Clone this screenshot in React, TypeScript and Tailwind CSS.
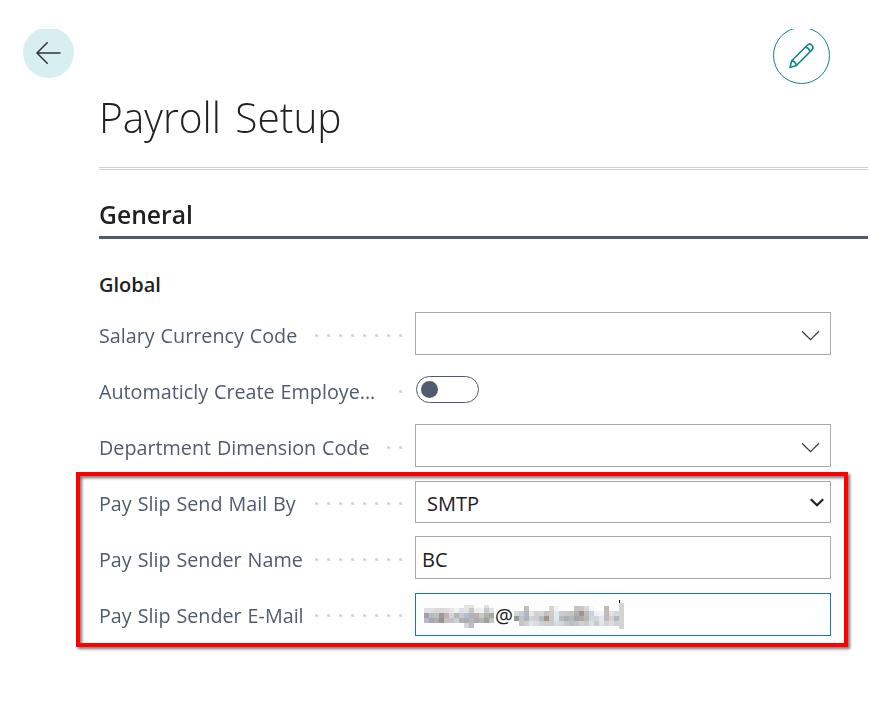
import React from "react";

type Strip = { y: number; h: number; cells: string };

// Each row lists one hex colour per 5px block; "-" leaves the block empty.
const localPart: Strip[] = [
  { y: 11, h: 3, cells: "- - - - - - - - e4e4e4 e4e4e4 - - e0e0e0 -" },
  { y: 14, h: 5, cells: "e2e2e6 e2e0e4 dedada dadade e0dcdc e6e6e6 f2f2f2 e0e0e8 e2e2e2 c8c8cc ececec f0f0f0 c8c8cc e0e0e0" },
  { y: 19, h: 5, cells: "a0a0b0 b8bcb8 c0c0c0 a09898 c4b4b0 d8d4d4 b4b8bc c8c8d0 b8bcd0 b4b0b8 b8b0b0 c8c8bc b0b4b0 a0a8a0" },
  { y: 24, h: 5, cells: "b8b8d0 a4a8b4 b4acb4 949494 c8c0b8 c4c4c8 c8d0d8 b0b0b0 acacb4 b8b4b8 acacb8 b4b4b4 9ca098 c0c4c0" },
  { y: 29, h: 5, cells: "- - - - - - - - dcd4d4 b8bcc8 - - - -" },
];

const domainPart: Strip[] = [
  { y: 12, h: 5, cells: "- - bcc0c0 - - - - dcd0cc ecf4fc - - - c4c4c4 d0c8c4 d8d8dc f0f8ff - - c0b8bc - -" },
  { y: 17, h: 5, cells: "d8d8d8 c8ccd0 b0b8bc e8e8e8 d8d0cc d0d8dc c0c0c8 d8c8c0 e0e8f0 c8ccd0 c8c8cc c0c4c4 b0b0b0 a09490 c0bcb8 c8d4e0 f0f0f0 f4f4f4 c0b8c0 e0e0e0 d4d8dc" },
  { y: 22, h: 5, cells: "9a9690 b8c4d0 a8b4bc d0d4d8 c8d0dc b4b8c0 a09488 d0c8c0 d8e8f4 b8b8c0 a8b0b0 b0b8b8 a4a4a4 aca8a4 b8b8b4 d0d8dc c8d8e4 e0e8f0 c0b8c0 d8d0c8 a8b8c4" },
  { y: 27, h: 5, cells: "- c4c4c8 d0d0d0 e0e4e8 dcdcdc ccd0d4 d0ccc8 c8ccd0 d8dce0 d4d4d4 c4c8c8 bcc0c0 c4c4c4 d0d0d0 c8ccc8 d8e0e4 c8ccd0 e4e4e4 d4d4d8 dcdcdc d0d0d4" },
];

function Mosaic({ strips, cols }: { strips: Strip[]; cols: number }) {
  return (
    <svg width={cols * 5} height="41" className="shrink-0" shapeRendering="crispEdges" aria-hidden="true">
      {strips.map((s) =>
        s.cells.split(" ").map((c, i) =>
          c === "-" ? null : <rect key={`${s.y}-${i}`} x={i * 5} y={s.y} width="5" height={s.h} fill={`#${c}`} />
        )
      )}
    </svg>
  );
}

function Row({ label, dots, children }: { label: string; dots: number; children: React.ReactNode }) {
  return (
    <div className="flex h-14 items-start">
      <div className="flex w-[316px] shrink-0 items-start pr-[13px]">
        <div className="mt-[10px] w-0 flex-1">
          <span className="inline-block origin-left scale-x-[.987] whitespace-nowrap text-[20px] leading-7 text-[#505c6d] [word-spacing:.8px]">
            {label}
          </span>
        </div>
        <div className="mt-[22px] flex gap-[9px]">
          {Array.from({ length: dots }, (_, i) => (
            <i key={i} className="size-[3px] rounded-full bg-[#cfd2d8]" />
          ))}
        </div>
      </div>
      {children}
    </div>
  );
}

const field = "flex w-[416px] border";
const value = "inline-block text-[20px] leading-7";

function Lookup() {
  return (
    <div className={`${field} h-[43px] items-center justify-end border-[#a9a9a9] pr-[10px]`}>
      <svg width="19" height="11" viewBox="0 0 19 11" fill="none" stroke="#404040" strokeWidth="1.3" className="mt-[3px]">
        <path d="M1 1.2 9.5 9.6 18 1.2" />
      </svg>
    </div>
  );
}

export default function App() {
  return (
    <div className="relative h-[704px] w-[870px] overflow-hidden bg-white pt-[29px] font-['Open_Sans','Noto_Sans',sans-serif] text-[#212121]">
      <header className="flex h-[55px] items-start justify-between overflow-hidden pl-[23px] pr-10">
        <button className="-mt-[2px] size-[51px] rounded-full bg-[#d8eff1]">
          <svg width="51" height="51" viewBox="0 0 51 51" fill="none" stroke="#333" strokeWidth="1.5">
            <path d="M37.500 26H14M24.700 15.300 14 26l10.700 10.700" />
          </svg>
        </button>
        <button className="-mt-[2px] size-[57px] shrink-0 rounded-full border border-[#118489]">
          <svg width="55" height="55" viewBox="1 1 55 55" fill="none" stroke="#118489" strokeWidth="1.6" strokeLinejoin="round">
            <path d="M17 40.400 18.700 33.800 34.300 18.300a3.250 3.250 0 0 1 4.600 4.600L23.400 38.500Z" />
            <path d="M18.900 33.900q3.700.7 4.400 4.400M32.500 20.100q3.500 1 4.600 4.500" />
          </svg>
        </button>
      </header>
      <main className="pl-[99px]">
        <div className="mr-[2px]">
          <h1 className="mt-px h-16 origin-left scale-x-[.945] whitespace-nowrap text-[43px] font-light leading-[64px] [word-spacing:4px]">
            Payroll Setup
          </h1>
          <div className="mt-[18px] border-t-[3px] border-double border-[#cfcfd6]" />
          <div className="mt-[26px] border-b-[3px] border-[#505c6d] pb-1">
            <h2 className="h-9 origin-left scale-x-[.95] text-[26px] font-semibold leading-9">General</h2>
          </div>
        </div>
        <h3 className="mb-[13px] mt-8 h-7 text-[20px] font-semibold leading-7">Global</h3>

        <Row label="Salary Currency Code" dots={8}>
          <Lookup />
        </Row>
        <Row label="Automaticly Create Employe..." dots={1}>
          <div className="ml-px mt-2 flex h-[27px] w-[63px] items-center rounded-full border border-[#505c6d] pl-1">
            <i className="size-[17px] rounded-full bg-[#505c6d]" />
          </div>
        </Row>
        <Row label="Department Dimension Code" dots={2}>
          <Lookup />
        </Row>
        <Row label="Pay Slip Send Mail By" dots={8}>
          <div className={`${field} mt-px h-[42px] items-start justify-between border-[#a9a9a9] pl-[11px] pr-[6px]`}>
            <span className={`${value} mt-2`}>SMTP</span>
            <svg width="14" height="9" viewBox="0 0 14 9" fill="none" stroke="#212121" strokeWidth="2.2" className="mt-4">
              <path d="M.8 1.200 7 7.200 13.200 1.200" />
            </svg>
          </div>
        </Row>
        <Row label="Pay Slip Sender Name" dots={8}>
          <div className={`${field} h-[43px] items-start border-[#a9a9a9] pl-[6px]`}>
            <span className={`${value} mt-[9px]`}>BC</span>
          </div>
        </Row>
        <Row label="Pay Slip Sender E-Mail" dots={8}>
          <div className={`${field} mt-px h-[43px] items-start border-[#118489] pl-2`}>
            <Mosaic strips={localPart} cols={14} />
            <span className="w-5 shrink-0 pl-px pt-2">
              <span className={value}>@</span>
            </span>
            <Mosaic strips={domainPart} cols={21} />
            <div className="mt-[6px] w-[5px]">
              <div className="h-[3px] w-px bg-black" />
              <div className="h-[26px] bg-[#d3d3d3]" />
            </div>
          </div>
        </Row>
      </main>
      <div className="pointer-events-none absolute left-[76px] top-[472px] h-[175px] w-[772px] border-4 border-[#ff0000] drop-shadow-[2px_2px_1.5px_rgba(0,0,0,0.55)]" />
    </div>
  );
}
